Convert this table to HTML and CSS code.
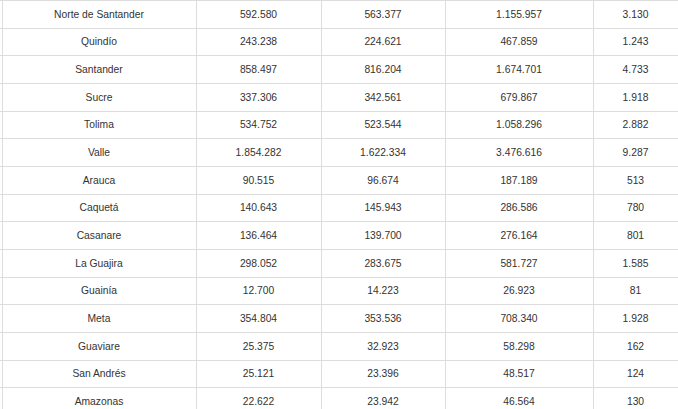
FILE: index.html
```html
<!DOCTYPE html>
<html lang="es">
<head>
<meta charset="utf-8">
<title>Tabla</title>
<link rel="stylesheet" href="styles.css">
</head>
<body>
<table class="data">
<colgroup>
<col class="c-edge"><col class="c1"><col class="c2"><col class="c3"><col class="c4"><col class="c5">
</colgroup>
<tbody>
<tr><td class="edge"></td><td>Norte de Santander</td><td>592.580</td><td>563.377</td><td>1.155.957</td><td>3.130</td></tr>
<tr><td class="edge"></td><td>Quindío</td><td>243.238</td><td>224.621</td><td>467.859</td><td>1.243</td></tr>
<tr><td class="edge"></td><td>Santander</td><td>858.497</td><td>816.204</td><td>1.674.701</td><td>4.733</td></tr>
<tr><td class="edge"></td><td>Sucre</td><td>337.306</td><td>342.561</td><td>679.867</td><td>1.918</td></tr>
<tr><td class="edge"></td><td>Tolima</td><td>534.752</td><td>523.544</td><td>1.058.296</td><td>2.882</td></tr>
<tr><td class="edge"></td><td>Valle</td><td>1.854.282</td><td>1.622.334</td><td>3.476.616</td><td>9.287</td></tr>
<tr><td class="edge"></td><td>Arauca</td><td>90.515</td><td>96.674</td><td>187.189</td><td>513</td></tr>
<tr><td class="edge"></td><td>Caquetá</td><td>140.643</td><td>145.943</td><td>286.586</td><td>780</td></tr>
<tr><td class="edge"></td><td>Casanare</td><td>136.464</td><td>139.700</td><td>276.164</td><td>801</td></tr>
<tr><td class="edge"></td><td>La Guajira</td><td>298.052</td><td>283.675</td><td>581.727</td><td>1.585</td></tr>
<tr><td class="edge"></td><td>Guainía</td><td>12.700</td><td>14.223</td><td>26.923</td><td>81</td></tr>
<tr><td class="edge"></td><td>Meta</td><td>354.804</td><td>353.536</td><td>708.340</td><td>1.928</td></tr>
<tr><td class="edge"></td><td>Guaviare</td><td>25.375</td><td>32.923</td><td>58.298</td><td>162</td></tr>
<tr><td class="edge"></td><td>San Andrés</td><td>25.121</td><td>23.396</td><td>48.517</td><td>124</td></tr>
<tr><td class="edge"></td><td>Amazonas</td><td>22.622</td><td>23.942</td><td>46.564</td><td>130</td></tr>
</tbody>
</table>
</body>
</html>
```
FILE: styles.css
```css
html, body {
  margin: 0;
  padding: 0;
  background: #ffffff;
}
body {
  font-family: "Liberation Sans", Arial, sans-serif;
  font-size: 10.3px;
  color: #333333;
  overflow: hidden;
}
.data {
  border-collapse: collapse;
  table-layout: fixed;
  width: 678px;
}
.c-edge { width: 2px; }
.c1 { width: 194px; }
.c2 { width: 125px; }
.c3 { width: 124px; }
.c4 { width: 148px; }
.c5 { width: 85px; }
.data td {
  border: 1px solid #dddddd;
  height: 27.67px;
  padding: 0;
  text-align: center;
  vertical-align: middle;
  box-sizing: border-box;
}
.data td.edge {
  border-left: none;
}
```
